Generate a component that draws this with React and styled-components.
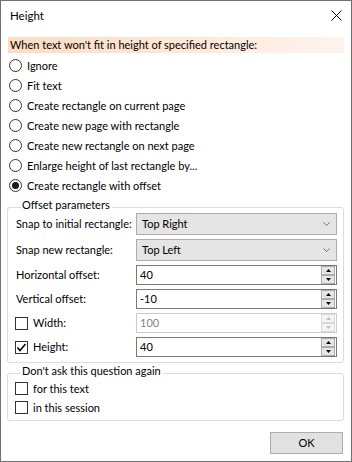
import React from 'react';
import styled, { createGlobalStyle } from 'styled-components';

const Global = createGlobalStyle`
  html, body { margin: 0; padding: 0; background: #fff; }
  body {
    font-family: Lato, "Liberation Sans", sans-serif;
    font-size: 11px;
    color: #000;
  }
  * { box-sizing: border-box; }
`;

const Window = styled.div`
  width: 352px;
  height: 462px;
  border: 1px solid #707070;
  background: #fff;
  display: flex;
  flex-direction: column;
  white-space: nowrap;
`;

const TitleBar = styled.div`
  flex: none;
  height: 29px;
  display: flex;
  align-items: center;
  justify-content: space-between;
  padding: 0 9px;
`;

const Title = styled.div`
  line-height: 16px;
  font-size: 11.5px;
`;

const Body = styled.div`
  flex: 1;
  display: flex;
  flex-direction: column;
  padding: 7px 7px 6px 7px;
`;

const Banner = styled.div`
  flex: none;
  height: 16px;
  line-height: 16px;
  padding-left: 2px;
  background: linear-gradient(to right, #fddcc2, #fff4ec);
`;

const RadioList = styled.div`
  margin-top: 2px;
  display: flex;
  flex-direction: column;
`;

const RadioRow = styled.div`
  height: 20px;
  display: flex;
  align-items: center;
  gap: 5px;
  padding-left: 1px;
`;

const RadioCircle = styled.span`
  width: 13px;
  height: 13px;
  border-radius: 50%;
  border: 1px solid #333;
  background: #fff;
  display: flex;
  align-items: center;
  justify-content: center;
  &::after {
    content: "";
    width: 7px;
    height: 7px;
    border-radius: 50%;
    background: ${(p) => (p.$checked ? '#1a1a1a' : 'transparent')};
  }
`;

const Group = styled.fieldset`
  flex: none;
  margin: ${(p) => p.$top}px 0 0 -1px;
  padding: 0 6px ${(p) => p.$bottom}px 8px;
  border: 1px solid #dcdcdc;
  border-radius: 3px;
  min-width: 0;
`;

const Legend = styled.legend`
  margin-left: 5px;
  padding: 0 2px 4px 1px;
  line-height: 8px;
`;

const FormGrid = styled.div`
  display: grid;
  grid-template-columns: 120px 1fr;
  row-gap: 4px;
  align-items: center;
`;

const FieldLabel = styled.div`
  line-height: 16px;
`;

const CheckLabel = styled.label`
  display: flex;
  align-items: center;
  gap: 5px;
  margin-left: -1px;
  line-height: 16px;
`;

const CheckRow = styled(CheckLabel)`
  height: 19px;
`;

const Box = styled.span`
  width: 13px;
  height: 13px;
  border: 1px solid #333;
  background: #fff;
  display: flex;
  align-items: center;
  justify-content: center;
  flex: none;
`;

const Combo = styled.div`
  height: 22px;
  border: 1px solid #acacac;
  background: #e5e5e5;
  display: flex;
  align-items: center;
  justify-content: space-between;
  padding: 0 6px 0 5px;
  line-height: 16px;
`;

const Spin = styled.div`
  height: 20px;
  border: 1px solid ${(p) => (p.$disabled ? '#cccccc' : '#7a7a7a')};
  background: #fff;
  display: flex;
`;

const SpinValue = styled.div`
  flex: 1;
  padding-left: 3px;
  line-height: 18px;
  color: ${(p) => (p.$disabled ? '#838383' : '#000')};
`;

const SpinButtons = styled.div`
  width: 14px;
  margin-right: 1px;
  display: flex;
  flex-direction: column;
`;

const SpinBtn = styled.div`
  flex: 1;
  background: ${(p) => (p.$disabled ? '#f4f4f4' : '#e6e6e6')};
  border: 1px solid ${(p) => (p.$disabled ? '#d9d9d9' : '#acacac')};
  display: flex;
  align-items: center;
  justify-content: center;
`;

const Footer = styled.div`
  margin-top: 11px;
  display: flex;
  justify-content: flex-end;
  padding-right: 1px;
`;

const Button = styled.button`
  width: 73px;
  height: 22px;
  background: #e1e1e1;
  border: 1px solid #adadad;
  font: inherit;
  color: #000;
  padding: 0;
  line-height: 16px;
`;

const CloseIcon = () => (
  <svg width="11" height="11" viewBox="0 0 11 11">
    <path d="M0.5 0.5 L10.5 10.5 M10.5 0.5 L0.5 10.5" stroke="#000" strokeWidth="1" />
  </svg>
);

const Chevron = () => (
  <svg width="7" height="4" viewBox="0 0 7 4">
    <path d="M0.5 0.5 L3.5 3.5 L6.5 0.5" stroke="#6d6d6d" strokeWidth="1" fill="none" />
  </svg>
);

const Arrow = ({ up, disabled }) => (
  <svg width="5" height="3" viewBox="0 0 5 3">
    <path d={up ? 'M0 3 L2.5 0 L5 3 Z' : 'M0 0 L5 0 L2.5 3 Z'} fill={disabled ? '#bfbfbf' : '#000'} />
  </svg>
);

const Tick = () => (
  <svg width="11" height="11" viewBox="0 0 11 11">
    <path d="M1.5 5.5 L4 8.5 L9.5 2" stroke="#000" strokeWidth="1.6" fill="none" />
  </svg>
);

const Radio = ({ label, checked }) => (
  <RadioRow>
    <RadioCircle $checked={checked} />
    <span>{label}</span>
  </RadioRow>
);

const Checkbox = ({ checked }) => <Box>{checked && <Tick />}</Box>;

const SpinBox = ({ value, disabled }) => (
  <Spin $disabled={disabled}>
    <SpinValue $disabled={disabled}>{value}</SpinValue>
    <SpinButtons>
      <SpinBtn $disabled={disabled}><Arrow up disabled={disabled} /></SpinBtn>
      <SpinBtn $disabled={disabled}><Arrow disabled={disabled} /></SpinBtn>
    </SpinButtons>
  </Spin>
);

const options = [
  'Ignore',
  'Fit text',
  'Create rectangle on current page',
  'Create new page with rectangle',
  'Create new rectangle on next page',
  'Enlarge height of last rectangle by...',
  'Create rectangle with offset',
];

export default function App() {
  return (
    <>
      <Global />
      <Window>
        <TitleBar>
          <Title>Height</Title>
          <CloseIcon />
        </TitleBar>
        <Body>
          <Banner>When text won't fit in height of specified rectangle:</Banner>
          <RadioList>
            {options.map((o, i) => (
              <Radio key={o} label={o} checked={i === options.length - 1} />
            ))}
          </RadioList>
          <Group $top={6} $bottom={5}>
            <Legend>Offset parameters</Legend>
            <FormGrid>
              <FieldLabel>Snap to initial rectangle:</FieldLabel>
              <Combo><span>Top Right</span><Chevron /></Combo>
              <FieldLabel>Snap new rectangle:</FieldLabel>
              <Combo><span>Top Left</span><Chevron /></Combo>
              <FieldLabel>Horizontal offset:</FieldLabel>
              <SpinBox value="40" />
              <FieldLabel>Vertical offset:</FieldLabel>
              <SpinBox value="-10" />
              <CheckLabel><Checkbox />Width:</CheckLabel>
              <SpinBox value="100" disabled />
              <CheckLabel><Checkbox checked />Height:</CheckLabel>
              <SpinBox value="40" />
            </FormGrid>
          </Group>
          <Group $top={4} $bottom={3}>
            <Legend>Don't ask this question again</Legend>
            <CheckRow><Checkbox />for this text</CheckRow>
            <CheckRow><Checkbox />in this session</CheckRow>
          </Group>
          <Footer>
            <Button>OK</Button>
          </Footer>
        </Body>
      </Window>
    </>
  );
}
